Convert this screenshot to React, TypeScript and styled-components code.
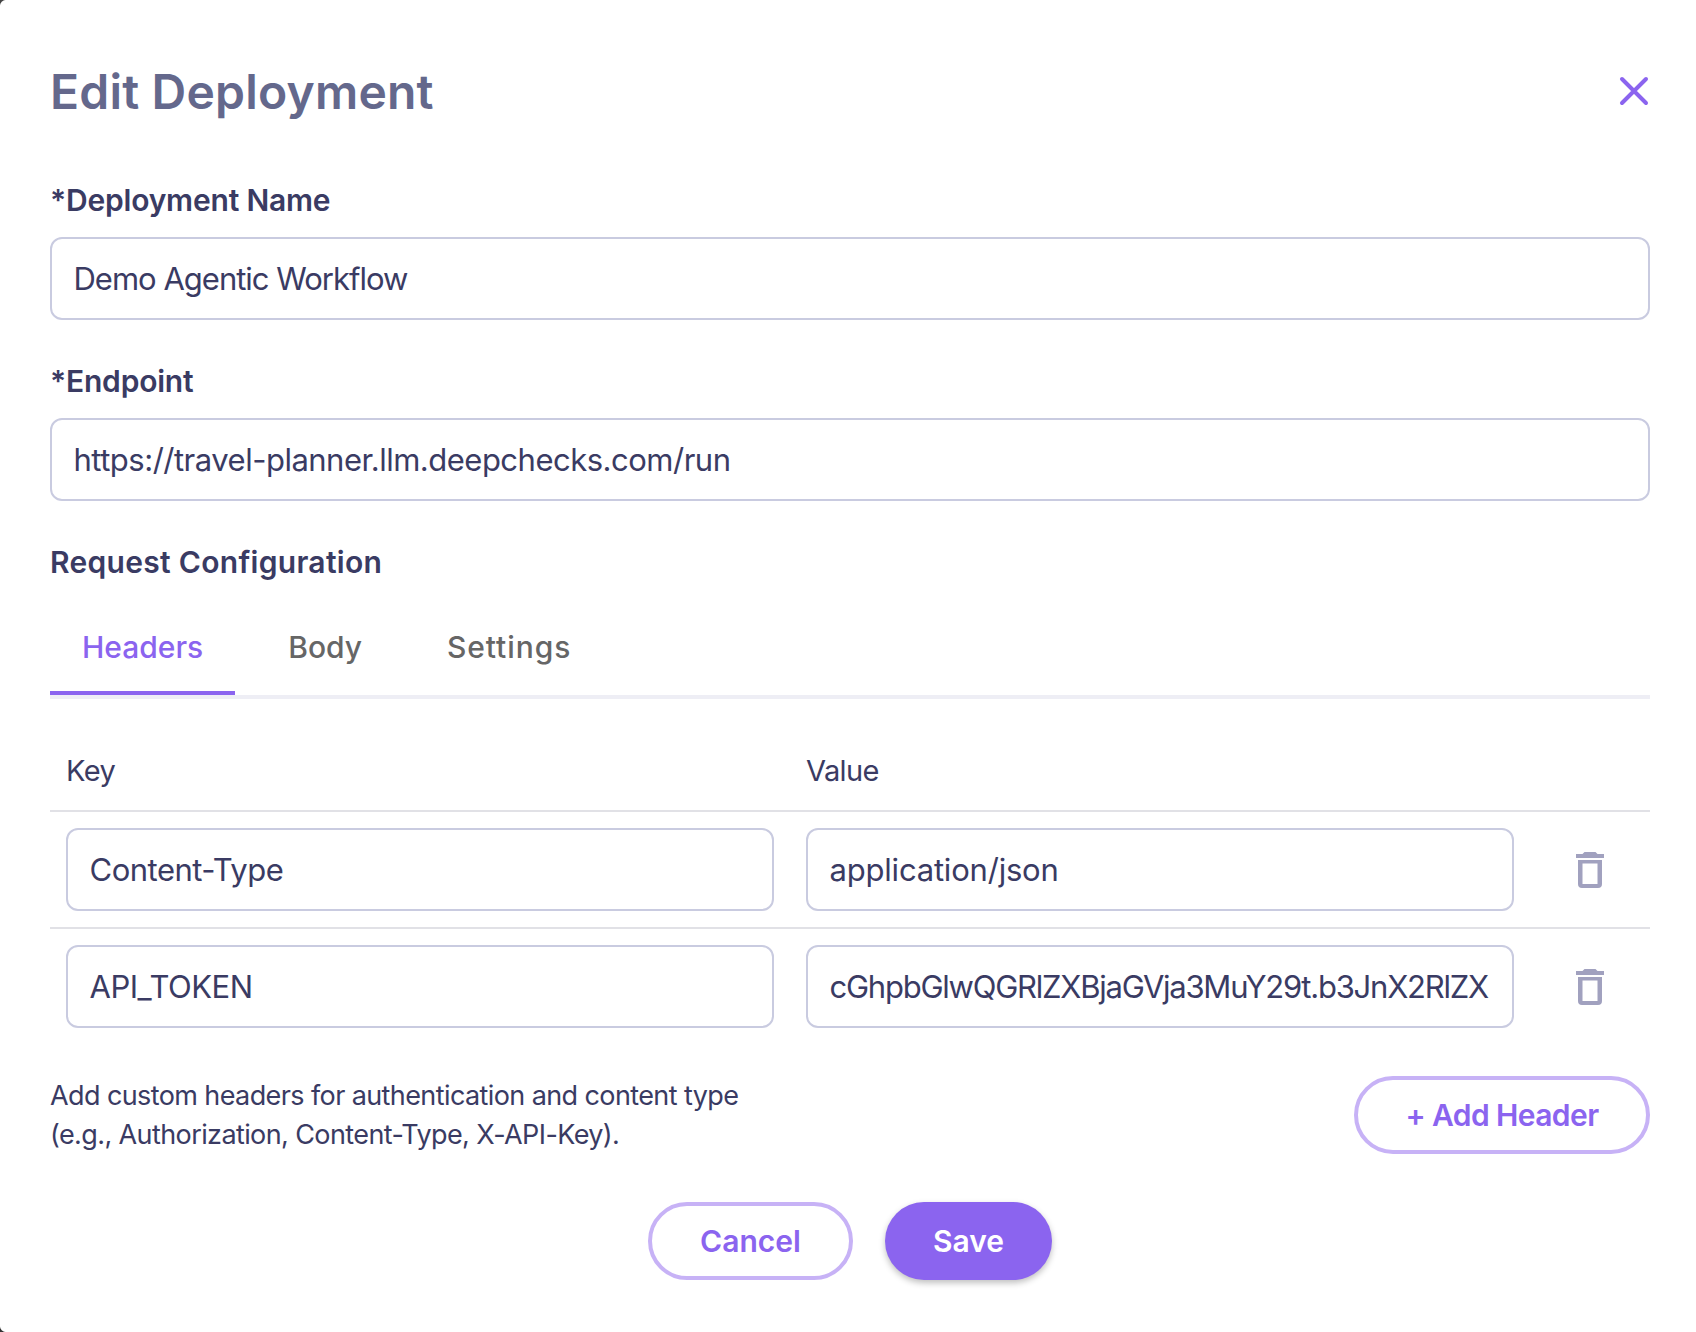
import React from "react";
import styled, { createGlobalStyle } from "styled-components";

const Global = createGlobalStyle`
  html, body { margin: 0; padding: 0; background: #fff; }
  * { box-sizing: border-box; }
`;

const Dialog = styled.div`
  position: relative;
  width: 1696px;
  height: 1332px;
  background: #fff;
  padding: 60px 46px 0 50px;
  font-family: Inter, "Liberation Sans", sans-serif;
  color: #3a3b63;
  overflow: hidden;

  &::before,
  &::after {
    content: "";
    position: absolute;
    left: 0;
    width: 6px;
    height: 6px;
  }
  &::before {
    top: 0;
    background: radial-gradient(circle at 100% 100%, transparent 5.5px, #444 6.5px);
  }
  &::after {
    bottom: 0;
    background: radial-gradient(circle at 100% 0, transparent 5.5px, #333 6.5px);
  }
`;

const Header = styled.div`
  display: flex;
  align-items: center;
  justify-content: space-between;
  height: 62px;
  margin-bottom: 58px;
`;

const Title = styled.h1`
  margin: 0;
  font-size: 48px;
  font-weight: 600;
  letter-spacing: 0.2px;
  color: #64688c;
`;

const CloseButton = styled.button`
  border: 0;
  padding: 0;
  background: none;
  display: flex;
  color: #8b64ef;
`;

const Label = styled.div`
  font-size: 30px;
  font-weight: 600;
  letter-spacing: -0.2px;
  line-height: 40px;
  margin-bottom: 17px;
`;

const SectionTitle = styled(Label)`
  letter-spacing: 0.3px;
`;

const Field = styled.div<{ $tracking?: number }>`
  height: 83px;
  border: 2px solid #c9cbe0;
  border-radius: 12px;
  background: #fff;
  display: flex;
  align-items: center;
  padding: 0 21.5px;
  font-size: 31px;
  letter-spacing: ${(p) => p.$tracking ?? -0.5}px;
  white-space: nowrap;
  overflow: hidden;
  margin-bottom: 41px;
`;

const Tabs = styled.div`
  display: flex;
  gap: 21px;
  border-bottom: 4px solid #eeeef5;
`;

const Tab = styled.div<{ $active?: boolean; $tracking?: number }>`
  padding: 0 32px;
  height: 96px;
  display: flex;
  align-items: center;
  font-size: 30px;
  font-weight: 500;
  letter-spacing: ${(p) => p.$tracking ?? 0}px;
  color: ${(p) => (p.$active ? "#8b64ef" : "#666666")};
  box-shadow: ${(p) => (p.$active ? "inset 0 -4px 0 #8b64ef" : "none")};
`;

const Row = styled.div<{ $head?: boolean }>`
  display: grid;
  grid-template-columns: 708px 708px 1fr;
  column-gap: 32px;
  align-items: center;
  padding: 0 0 0 16px;
  border-bottom: 2px solid #e1e1e6;
  height: ${(p) => (p.$head ? "113px" : "117px")};
  padding-top: ${(p) => (p.$head ? "32px" : "0")};
`;

const LastRow = styled(Row)`
  border-bottom: 0;
  height: 115px;
`;

const HeadCell = styled.div`
  font-size: 29px;
  letter-spacing: -0.6px;
`;

const CellField = styled(Field)`
  margin: 0;
`;

const Trash = styled.button`
  border: 0;
  padding: 0;
  background: none;
  display: flex;
  justify-content: center;
  color: #a1a1bf;
  margin-left: -16px;
`;

const HelpRow = styled.div`
  display: flex;
  align-items: center;
  justify-content: space-between;
  margin-top: 32px;
`;

const Help = styled.div`
  font-size: 27px;
  line-height: 39px;
  letter-spacing: -0.6px;
`;

const Pill = styled.button<{ $primary?: boolean }>`
  height: 78px;
  border-radius: 39px;
  border: ${(p) => (p.$primary ? "0" : "4px solid #c7b2f6")};
  background: ${(p) => (p.$primary ? "#8b64ef" : "#fff")};
  color: ${(p) => (p.$primary ? "#fff" : "#8b64ef")};
  font-family: inherit;
  font-size: 30px;
  font-weight: 600;
  padding: 0;
  box-shadow: ${(p) => (p.$primary ? "0 3px 6px rgba(0,0,0,.25)" : "none")};
`;

const AddButton = styled(Pill)`
  width: 296px;
  letter-spacing: -0.6px;
`;

const CancelButton = styled(Pill)`
  width: 205px;
`;

const SaveButton = styled(Pill)`
  width: 167px;
`;

const Footer = styled.div`
  display: flex;
  justify-content: center;
  gap: 32px;
  margin-top: 48px;
`;

const TrashIcon = () => (
  <svg width="28" height="36" viewBox="0 0 28 36" fill="currentColor">
    <path d="M8.5 0h11l2 2H28v4H0V2h6.5z" />
    <path fillRule="evenodd" d="M2 8h24v24a4 4 0 0 1-4 4H6a4 4 0 0 1-4-4zm4.5 3.5V32h15V11.5z" />
  </svg>
);

export default function App() {
  return (
    <Dialog>
      <Global />
      <Header>
        <Title>Edit Deployment</Title>
        <CloseButton aria-label="Close">
          <svg width="32" height="32" viewBox="0 0 32 32" fill="none" stroke="currentColor" strokeWidth="4" strokeLinecap="round">
            <path d="M4 4l24 24M28 4L4 28" />
          </svg>
        </CloseButton>
      </Header>
      <Label>*Deployment Name</Label>
      <Field $tracking={-1}>Demo Agentic Workflow</Field>
      <Label>*Endpoint</Label>
      <Field>https://travel-planner.llm.deepchecks.com/run</Field>
      <SectionTitle>Request Configuration</SectionTitle>
      <Tabs>
        <Tab $active>Headers</Tab>
        <Tab>Body</Tab>
        <Tab $tracking={0.9}>Settings</Tab>
      </Tabs>
      <Row $head>
        <HeadCell>Key</HeadCell>
        <HeadCell>Value</HeadCell>
      </Row>
      <Row>
        <CellField>Content-Type</CellField>
        <CellField $tracking={-0.2}>application/json</CellField>
        <Trash aria-label="Delete"><TrashIcon /></Trash>
      </Row>
      <LastRow>
        <CellField>API_TOKEN</CellField>
        <CellField $tracking={-1.24}>cGhpbGlwQGRlZXBjaGVja3MuY29t.b3JnX2RlZX</CellField>
        <Trash aria-label="Delete"><TrashIcon /></Trash>
      </LastRow>
      <HelpRow>
        <Help>
          Add custom headers for authentication and content type
          <br />
          (e.g., Authorization, Content-Type, X-API-Key).
        </Help>
        <AddButton>+ Add Header</AddButton>
      </HelpRow>
      <Footer>
        <CancelButton>Cancel</CancelButton>
        <SaveButton $primary>Save</SaveButton>
      </Footer>
    </Dialog>
  );
}
